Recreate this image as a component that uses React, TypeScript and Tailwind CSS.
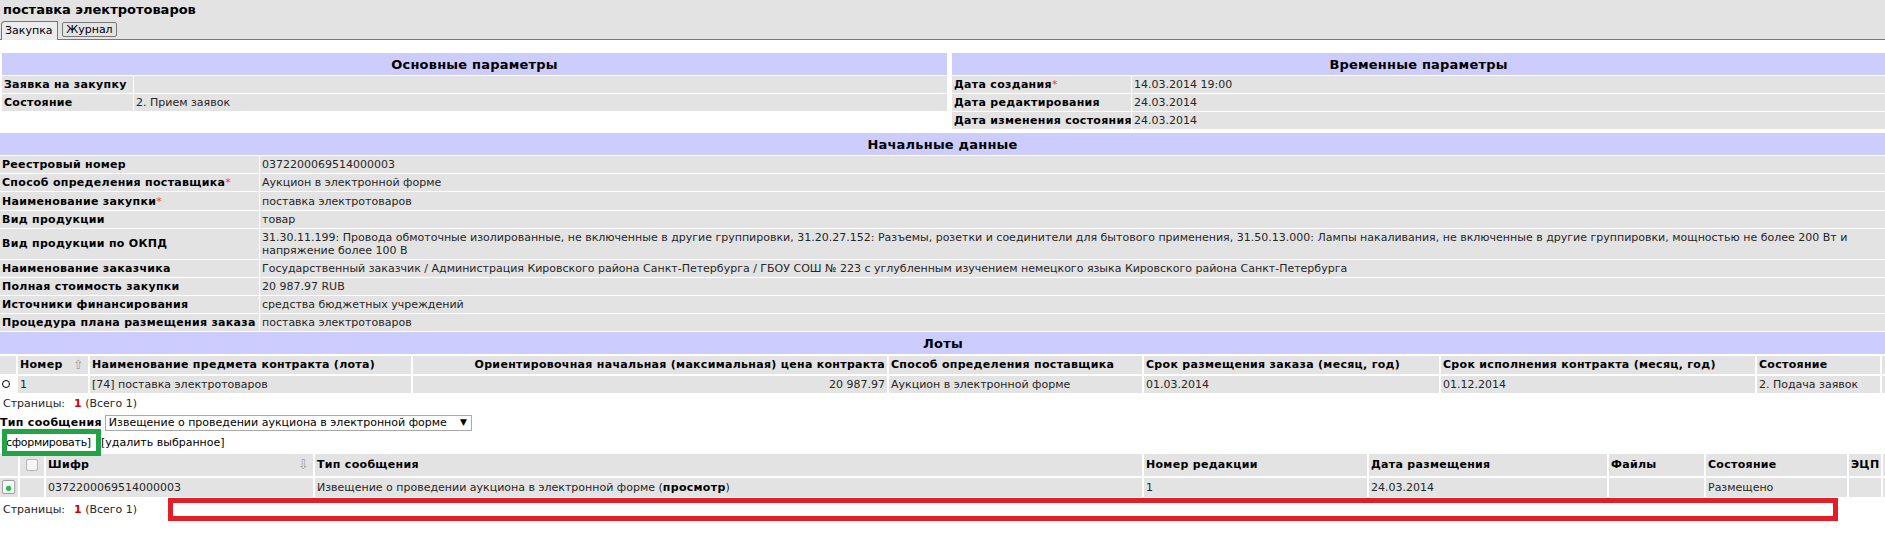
const cell = 'bg-[#e3e3e3] px-[2px] whitespace-nowrap overflow-hidden';
const head = 'bg-[#ccccff] font-bold text-[13px] tracking-[0.2px] text-black flex items-center justify-center';
const bold = 'font-bold tracking-[0.3px] text-black';

function Star() {
  return <span className="font-normal tracking-normal text-[#e8413c]">*</span>;
}

function Label({ children }: { children: React.ReactNode }) {
  return <div className={`${cell} ${bold} h-[17.1px] flex items-center`}>{children}</div>;
}

function Value({ children }: { children?: React.ReactNode }) {
  return <div className={`${cell} h-[17.1px] flex items-center`}>{children}</div>;
}

function Pages() {
  return (
    <span className="whitespace-nowrap">
      Страницы:<span className="ml-[9px] font-bold text-[#d40000]">1</span> (Всего 1)
    </span>
  );
}

function DocIcon() {
  return (
    <svg width="16" height="16" viewBox="0 0 16 16">
      <rect x="0.5" y="0.5" width="14" height="15" rx="2" fill="#fbfbfb" stroke="#8c8c8c" />
      <circle cx="7.5" cy="9.5" r="3" fill="#1dc14a" />
    </svg>
  );
}

const initial: [React.ReactNode, string][] = [
  ['Реестровый номер', '0372200069514000003'],
  [<>Способ определения поставщика<Star /></>, 'Аукцион в электронной форме'],
  [<>Наименование закупки<Star /></>, 'поставка электротоваров'],
  ['Вид продукции', 'товар'],
];

const initialTail: [string, string][] = [
  ['Наименование заказчика', 'Государственный заказчик / Администрация Кировского района Санкт-Петербурга / ГБОУ СОШ № 223 с углубленным изучением немецкого языка Кировского района Санкт-Петербурга'],
  ['Полная стоимость закупки', '20 987.97 RUB'],
  ['Источники финансирования', 'средства бюджетных учреждений'],
  ['Процедура плана размещения заказа', 'поставка электротоваров'],
];

export default function App() {
  return (
    <div className="min-h-[558px] bg-white font-['DejaVu_Sans',Verdana,sans-serif] text-[11px] leading-[13px] text-[#262626]">
      {/* заголовок и вкладки */}
      <div className="bg-[#e3e3e3]">
        <div className="h-[21px] pl-[3px] pt-[2px] text-[13px] leading-[15px] font-bold text-black">поставка электротоваров</div>
        <div className="flex h-[19px]">
          <div className="w-[1px] border-b border-[#777]" />
          <div className="w-[57px] border-l border-t border-r border-[#777] rounded-tl-[4px] bg-[#ececec] pl-[3px] pt-[2px] text-black">
            Закупка
          </div>
          <div className="flex-1 border-b border-[#777] pl-[4px] pt-[1px]">
            <span className="inline-flex h-[15px] w-[55px] items-center justify-center rounded-[2px] border border-[#777] text-black">
              Журнал
            </span>
          </div>
        </div>
      </div>

      {/* основные и временные параметры */}
      <div className="mt-[13px] flex items-start">
        <div className="ml-[2px] w-[945px] grid grid-cols-[131px_1fr] gap-[1px]">
          <div className={`${head} col-span-2 h-[22px]`}>Основные параметры</div>
          <Label>Заявка на закупку</Label>
          <Value />
          <Label>Состояние</Label>
          <Value>2. Прием заявок</Value>
        </div>
        <div className="ml-[5px] flex-1 grid grid-cols-[179px_1fr] gap-[1px]">
          <div className={`${head} col-span-2 h-[22px]`}>Временные параметры</div>
          <Label>Дата создания<Star /></Label>
          <Value>14.03.2014 19:00</Value>
          <Label>Дата редактирования</Label>
          <Value>24.03.2014</Value>
          <Label>Дата изменения состояния</Label>
          <Value>24.03.2014</Value>
        </div>
      </div>

      {/* начальные данные */}
      <div className="mt-[4px] grid grid-cols-[259px_1fr] gap-[1px]">
        <div className={`${head} col-span-2 h-[22px]`}>Начальные данные</div>
        {initial.map(([l, v], i) => (
          <div key={i} className="contents">
            <Label>{l}</Label>
            <Value>{v}</Value>
          </div>
        ))}
        <div className={`${cell} ${bold} h-[30.1px] flex items-center`}>Вид продукции по ОКПД</div>
        <div className={`${cell} h-[30.1px] py-[2px]`}>
          31.30.11.199: Провода обмоточные изолированные, не включенные в другие группировки, 31.20.27.152: Разъемы, розетки и соединители для бытового применения, 31.50.13.000: Лампы накаливания, не включенные в другие группировки, мощностью не более 200 Вт и
          <br />
          напряжение более 100 В
        </div>
        {initialTail.map(([l, v]) => (
          <div key={l} className="contents">
            <Label>{l}</Label>
            <Value>{v}</Value>
          </div>
        ))}
      </div>

      {/* лоты */}
      <div className="mt-[1px] grid grid-cols-[16px_70px_321px_474px_253px_295px_314px_123px_1fr] gap-[2px]">
        <div className={`${head} col-span-9 h-[22px]`}>Лоты</div>
        <div className={`${cell} h-[17.4px]`} />
        <div className={`${cell} ${bold} h-[17.4px] flex items-center justify-between`}>
          Номер<span className="mr-[2px] font-normal text-[13px] text-[#a0a0a0]">⇧</span>
        </div>
        <div className={`${cell} ${bold} h-[17.4px] flex items-center`}>Наименование предмета контракта (лота)</div>
        <div className={`${cell} ${bold} h-[17.4px] flex items-center justify-end`}>Ориентировочная начальная (максимальная) цена контракта</div>
        <div className={`${cell} ${bold} h-[17.4px] flex items-center`}>Способ определения поставщика</div>
        <div className={`${cell} ${bold} h-[17.4px] flex items-center`}>Срок размещения заказа (месяц, год)</div>
        <div className={`${cell} ${bold} h-[17.4px] flex items-center`}>Срок исполнения контракта (месяц, год)</div>
        <div className={`${cell} ${bold} h-[17.4px] flex items-center`}>Состояние</div>
        <div className={`${cell} h-[17.4px]`} />

        <div className="h-[17.4px] flex items-center pl-[2px]">
          <span className="h-[8px] w-[8px] rounded-full border border-black bg-white" />
        </div>
        <div className={`${cell} h-[17.4px] flex items-center`}>1</div>
        <div className={`${cell} h-[17.4px] flex items-center`}>[74] поставка электротоваров</div>
        <div className={`${cell} h-[17.4px] flex items-center justify-end`}>20 987.97</div>
        <div className={`${cell} h-[17.4px] flex items-center`}>Аукцион в электронной форме</div>
        <div className={`${cell} h-[17.4px] flex items-center`}>01.03.2014</div>
        <div className={`${cell} h-[17.4px] flex items-center`}>01.12.2014</div>
        <div className={`${cell} h-[17.4px] flex items-center`}>2. Подача заявок</div>
        <div className={`${cell} h-[17.4px]`} />
      </div>

      <div className="mt-[4px] pl-[3px] h-[13px]">
        <Pages />
      </div>

      {/* тип сообщения */}
      <div className="mt-[5px] flex items-center h-[16px]">
        <span className={bold}>Тип сообщения</span>
        <span className="ml-[3px] flex h-[16px] w-[367px] items-center justify-between border border-[#a9a9a9] bg-white pl-[3px] pr-[4px] text-black">
          Извещение о проведении аукциона в электронной форме
          <span className="text-[9px]">▼</span>
        </span>
      </div>

      {/* действия */}
      <div className="relative mt-[4px] flex h-[15px] items-center pl-[2px] text-black">
        <span className="inline-block w-[97px] whitespace-nowrap tracking-[-0.3px]">[сформировать]</span>
        <span className="ml-[2px] whitespace-nowrap">[удалить выбранное]</span>
        <div className="absolute left-[2px] top-[-6px] h-[27px] w-[99px] border-[5px] border-[#22a446]" />
      </div>

      {/* сообщения */}
      <div className="mt-[4px] grid grid-cols-[18px_24px_267px_827px_223px_238px_95px_141px_32px_1fr] gap-[2px]">
        <div className={`${cell} h-[22px]`} />
        <div className={`${cell} h-[22px] flex items-center justify-center`}>
          <span className="h-[12px] w-[12px] rounded-[2px] border border-[#b3b3b3] bg-[#f5f5f5]" />
        </div>
        <div className={`${cell} ${bold} h-[22px] flex items-center justify-between`}>
          Шифр<span className="mr-[2px] font-normal text-[13px] text-[#a0a0a0]">⇩</span>
        </div>
        <div className={`${cell} ${bold} h-[22px] flex items-center`}>Тип сообщения</div>
        <div className={`${cell} ${bold} h-[22px] flex items-center`}>Номер редакции</div>
        <div className={`${cell} ${bold} h-[22px] flex items-center`}>Дата размещения</div>
        <div className={`${cell} ${bold} h-[22px] flex items-center`}>Файлы</div>
        <div className={`${cell} ${bold} h-[22px] flex items-center`}>Состояние</div>
        <div className={`${cell} ${bold} h-[22px] flex items-center`}>ЭЦП</div>
        <div className={`${cell} h-[22px]`} />

        <div className={`${cell} h-[19px] flex items-center px-[1px]`}>
          <DocIcon />
        </div>
        <div className={`${cell} h-[19px]`} />
        <div className={`${cell} h-[19px] flex items-center`}>0372200069514000003</div>
        <div className={`${cell} h-[19px] flex items-center`}>
          Извещение о проведении аукциона в электронной форме (<b className="tracking-[0.3px] text-black">просмотр</b>)
        </div>
        <div className={`${cell} h-[19px] flex items-center`}>1</div>
        <div className={`${cell} h-[19px] flex items-center`}>24.03.2014</div>
        <div className={`${cell} h-[19px]`} />
        <div className={`${cell} h-[19px] flex items-center`}>Размещено</div>
        <div className={`${cell} h-[19px]`} />
        <div className={`${cell} h-[19px]`} />
      </div>

      <div className="mt-[1px] flex items-center pl-[3px]">
        <Pages />
        <div className="ml-[31px] h-[23px] w-[1670px] border-[5px] border-[#e31e26]" />
      </div>
    </div>
  );
}
